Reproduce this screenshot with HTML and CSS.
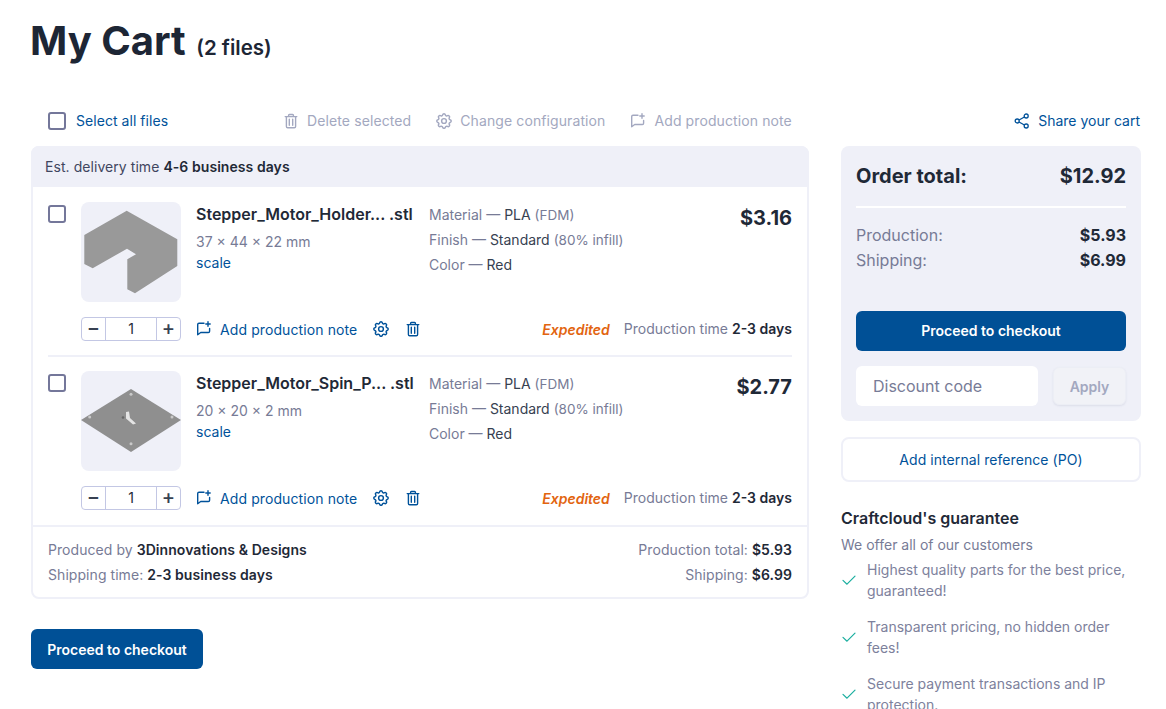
FILE: index.html
```html
<!DOCTYPE html>
<html lang="en">
<head>
<meta charset="utf-8">
<title>My Cart</title>
<link rel="stylesheet" href="styles.css">
</head>
<body>
<svg class="defs" width="0" height="0" aria-hidden="true">
  <symbol id="i-trash" viewBox="0 0 16 16"><path d="M2.200 3.600h11.600M5.600 3.400V2.300c0-.5.3-.8.8-.8h3.200c.5 0 .8.3.8.8v1.100M3.400 3.800v9.600c0 .8.5 1.300 1.300 1.300h6.600c.8 0 1.300-.5 1.300-1.300V3.800M6.300 6.300v5.900M9.700 6.300v5.900" fill="none" stroke="currentColor" stroke-width="1.400" stroke-linecap="round" stroke-linejoin="round"/></symbol>
  <symbol id="i-gear" viewBox="2 2 20 20"><path d="M10.300 4.300c.4-1.800 3-1.800 3.400 0a1.700 1.700 0 0 0 2.600 1.100c1.500-1 3.400.9 2.400 2.400a1.700 1.700 0 0 0 1 2.600c1.800.4 1.800 3 0 3.400a1.700 1.700 0 0 0-1 2.600c1 1.500-.9 3.400-2.400 2.400a1.700 1.700 0 0 0-2.600 1c-.4 1.800-3 1.800-3.400 0a1.700 1.700 0 0 0-2.600-1c-1.500 1-3.400-.9-2.400-2.400a1.700 1.700 0 0 0-1-2.600c-1.800-.4-1.800-3 0-3.400a1.700 1.700 0 0 0 1-2.600c-1-1.500.9-3.400 2.400-2.400a1.700 1.700 0 0 0 2.600-1.100z" fill="none" stroke="currentColor" stroke-width="1.800" stroke-linejoin="round"/><circle cx="12" cy="12" r="3" fill="none" stroke="currentColor" stroke-width="1.800"/></symbol>
  <symbol id="i-note" viewBox="0 0 16 16"><path d="M8 2.200H3c-.8 0-1.300.5-1.300 1.300v10.200l3-2.200h7.600c.8 0 1.300-.5 1.300-1.300V7.400M12 .8v4.400M9.800 3h4.400" fill="none" stroke="currentColor" stroke-width="1.400" stroke-linecap="round" stroke-linejoin="round"/></symbol>
  <symbol id="i-share" viewBox="0 0 16 16"><g fill="none" stroke="currentColor" stroke-width="1.300"><circle cx="3.200" cy="8" r="2"/><circle cx="12.200" cy="3" r="2"/><circle cx="12.200" cy="13" r="2"/><path d="M5 7l5.400-3M5 9l5.400 3"/></g></symbol>
  <symbol id="i-check" viewBox="0 0 14 14"><path d="M1 7.400l4 3.800L13 3.200" fill="none" stroke="currentColor" stroke-width="1.200" stroke-linecap="round" stroke-linejoin="round"/></symbol>
</svg>

<main class="page">
  <h1 class="title">My Cart <small class="title-count">(2 files)</small></h1>

  <div class="toolbar">
    <label class="select-all"><span class="check"></span><span>Select all files</span></label>
    <div class="bulk">
      <span class="bulk-item"><svg class="ic16"><use href="#i-trash"/></svg>Delete selected</span>
      <span class="bulk-item"><svg class="ic16"><use href="#i-gear"/></svg>Change configuration</span>
      <span class="bulk-item"><svg class="ic16"><use href="#i-note"/></svg>Add production note</span>
    </div>
    <span class="share"><svg class="ic16"><use href="#i-share"/></svg>Share your cart</span>
  </div>

  <div class="columns">
    <div class="main-col">
      <section class="cart">
        <div class="cart-head">Est. delivery time <b>4-6 business days</b></div>

        <div class="items">
          <article class="item">
            <div class="item-top">
              <span class="check item-check"></span>
              <div class="thumb">
                <svg width="100" height="100" viewBox="0 0 100 100"><path d="M45.700 8.700 L96.300 37.300 L96.300 64 L54 91.300 L46.300 87.300 L46.300 57.300 L55 52.300 L46 46.700 L11.700 66.300 L3.300 62 L3.300 33 Z" fill="#999"/></svg>
              </div>
              <div class="file">
                <div class="file-name">Stepper_Motor_Holder... .stl</div>
                <div class="file-size">37 × 44 × 22 mm</div>
                <div class="file-scale">scale</div>
              </div>
              <ul class="spec">
                <li>Material — <em>PLA</em> <span>(FDM)</span></li>
                <li>Finish — <em>Standard</em> <span>(80% infill)</span></li>
                <li>Color — <em>Red</em></li>
              </ul>
              <div class="price">$3.16</div>
            </div>
            <div class="item-bottom">
              <div class="stepper"><span class="step">−</span><span class="qty">1</span><span class="step">+</span></div>
              <span class="note"><svg class="ic16"><use href="#i-note"/></svg><span class="note-text">Add production note</span></span>
              <svg class="ic16 act gear"><use href="#i-gear"/></svg>
              <svg class="ic16 act"><use href="#i-trash"/></svg>
              <span class="expedited">Expedited</span>
              <span class="prod-time">Production time <b>2-3 days</b></span>
            </div>
          </article>

          <article class="item">
            <div class="item-top">
              <span class="check item-check"></span>
              <div class="thumb">
                <svg width="100" height="100" viewBox="0 0 100 100"><path d="M50 18 L100 49 L50 81 L0 49 Z" fill="#8f8f8f"/><g fill="#c9c9c9"><circle cx="50" cy="23.300" r="1.500"/><circle cx="8.700" cy="46" r="1.500"/><circle cx="91" cy="46" r="1.500"/><circle cx="50" cy="72.700" r="1.500"/></g><path d="M45 41 L45 47.500 L52 53.500 L55 52.500 L49 47 L48 40.500 Z" fill="#e4e4e4"/><circle cx="42" cy="46.500" r="1.300" fill="#666"/></svg>
              </div>
              <div class="file">
                <div class="file-name">Stepper_Motor_Spin_P... .stl</div>
                <div class="file-size">20 × 20 × 2 mm</div>
                <div class="file-scale">scale</div>
              </div>
              <ul class="spec">
                <li>Material — <em>PLA</em> <span>(FDM)</span></li>
                <li>Finish — <em>Standard</em> <span>(80% infill)</span></li>
                <li>Color — <em>Red</em></li>
              </ul>
              <div class="price">$2.77</div>
            </div>
            <div class="item-bottom">
              <div class="stepper"><span class="step">−</span><span class="qty">1</span><span class="step">+</span></div>
              <span class="note"><svg class="ic16"><use href="#i-note"/></svg><span class="note-text">Add production note</span></span>
              <svg class="ic16 act gear"><use href="#i-gear"/></svg>
              <svg class="ic16 act"><use href="#i-trash"/></svg>
              <span class="expedited">Expedited</span>
              <span class="prod-time">Production time <b>2-3 days</b></span>
            </div>
          </article>
        </div>

        <div class="cart-foot">
          <div>
            <p>Produced by <b>3Dinnovations &amp; Designs</b></p>
            <p>Shipping time: <b>2-3 business days</b></p>
          </div>
          <div class="foot-right">
            <p>Production total: <b>$5.93</b></p>
            <p>Shipping: <b>$6.99</b></p>
          </div>
        </div>
      </section>
      <button class="btn btn-main">Proceed to checkout</button>
    </div>

    <aside class="side">
      <div class="summary">
        <div class="total"><span>Order total:</span><span>$12.92</span></div>
        <div class="line"><span>Production:</span><b>$5.93</b></div>
        <div class="line"><span>Shipping:</span><b>$6.99</b></div>
        <button class="btn btn-full">Proceed to checkout</button>
        <div class="discount">
          <input class="code" type="text" placeholder="Discount code">
          <button class="apply">Apply</button>
        </div>
      </div>
      <button class="po">Add internal reference (PO)</button>
      <h2 class="guarantee">Craftcloud's guarantee</h2>
      <p class="offer">We offer all of our customers</p>
      <ul class="perks">
        <li><svg class="ic-check"><use href="#i-check"/></svg><span>Highest quality parts for the best price, guaranteed!</span></li>
        <li><svg class="ic-check"><use href="#i-check"/></svg><span>Transparent pricing, no hidden order fees!</span></li>
        <li><svg class="ic-check"><use href="#i-check"/></svg><span>Secure payment transactions and IP protection.</span></li>
      </ul>
    </aside>
  </div>
</main>
</body>
</html>
```
FILE: styles.css
```css
* { box-sizing: border-box; }
html, body { height: 709px; overflow: hidden; }
body { margin: 0; background: #fff; color: #1f2937; font-family: Inter, "Liberation Sans", sans-serif; font-size: 14px; line-height: 20px; }
.defs { position: absolute; }
.page { padding: 16px 25px 0 31px; }
.title { margin: 0 0 0 -1px; font-size: 40px; line-height: 50px; font-weight: 700; color: #1d2635; }
.title-count { margin-left: 1px; font-size: 20.500px; font-weight: 600; }
.toolbar { display: flex; align-items: center; height: 24px; margin-top: 36px; padding: 0 1px 0 17px; letter-spacing: .1px; }
.select-all { display: flex; align-items: center; gap: 10px; color: #00529a; letter-spacing: .05px; }
.check { display: block; width: 18px; height: 18px; border: 2px solid #74779a; border-radius: 3px; background: #fff; flex: none; }
.bulk { display: flex; gap: 25px; margin-left: 115px; color: #a3a8c0; }
.bulk-item { display: flex; align-items: center; gap: 8px; }
.ic16 { width: 16px; height: 16px; flex: none; display: block; }
.share { display: flex; align-items: center; gap: 8px; margin-left: auto; color: #00529a; letter-spacing: 0; }
.columns { display: flex; gap: 32px; margin-top: 13px; align-items: flex-start; }
.main-col { width: 778px; flex: none; }
.cart { height: 453px; border: 2px solid #eff0f8; border-radius: 8px; }
.cart-head { height: 41px; margin: -2px -2px 0; padding: 11px 14px 0; background: #eff0f8; border-radius: 8px 8px 0 0; color: #3f4660; letter-spacing: .06px; }
.cart-head b { font-weight: 600; color: #1f2937; }
.items { padding: 15px 15px 0; }
.item + .item { border-top: 2px solid #eff0f8; margin-top: 14px; padding-top: 14px; }
.item-top { display: flex; height: 100px; }
.item-check { margin-top: 3px; }
.thumb { width: 100px; height: 100px; margin-left: 15px; background: #eff0f8; border-radius: 8px; flex: none; overflow: hidden; }
.thumb svg { display: block; }
.file { width: 248px; padding: 2px 0 0 15px; flex: none; }
.file-name { font-size: 16px; line-height: 20px; font-weight: 600; color: #1f2937; white-space: nowrap; }
.file-size { margin-top: 8px; font-size: 14px; line-height: 20px; color: #777b96; }
.file-scale { margin-top: 1px; font-size: 14px; line-height: 20px; color: #00529a; }
.spec { list-style: none; margin: 0; padding: 3px 0 0; flex: 1; color: #777b96; font-size: 14px; }
.spec li { height: 25px; line-height: 20px; white-space: nowrap; }
.spec em { font-style: normal; color: #374151; }
.spec span { font-size: 13.500px; }
.price { font-size: 20px; line-height: 24px; font-weight: 700; color: #1f2937; margin-top: 4px; }
.item-bottom { display: flex; align-items: center; height: 24px; margin-top: 15px; padding-left: 33px; }
.stepper { display: flex; width: 100px; height: 24px; border: 1px solid #c3c7e4; border-radius: 4px; flex: none; }
.step { width: 23px; text-align: center; line-height: 21px; font-size: 20px; font-weight: 500; color: #374151; flex: none; }
.qty { flex: 1; text-align: center; line-height: 22px; border: solid #c3c7e4; border-width: 0 1px; color: #1f2937; }
.note { display: flex; align-items: center; gap: 8px; margin-left: 15px; color: #00529a; letter-spacing: .1px; }
.note-text { padding-top: 2px; }
.act { color: #00529a; }
.gear { margin-left: 16px; margin-right: 16px; }
.expedited { margin-left: auto; padding-top: 2px; font-weight: 600; font-style: italic; color: #e2640f; }
.prod-time { margin-left: 14px; color: #777b96; }
.prod-time b { font-weight: 600; color: #1f2937; }
.cart-foot { display: flex; justify-content: space-between; margin-top: 15px; padding: 13px 15px 0; border-top: 2px solid #eff0f8; color: #777b96; letter-spacing: .06px; }
.cart-foot p { margin: 0 0 5px; line-height: 20px; }
.cart-foot b { font-weight: 600; color: #1f2937; }
.foot-right { text-align: right; }
.btn { display: block; height: 40px; border: 0; border-radius: 6px; background: #005096; color: #fff; font: 600 14px/20px Inter, "Liberation Sans", sans-serif; }
.btn-main { width: 172px; margin-top: 30px; padding-top: 2px; }
.side { width: 300px; flex: none; }
.summary { height: 275px; background: #eff0f8; border-radius: 8px; padding: 15px; }
.total { display: flex; justify-content: space-between; height: 42px; padding-top: 3px; font-size: 20px; line-height: 24px; font-weight: 700; color: #1f2937; border-bottom: 2px solid #fff; box-sizing: content-box; }
.line { display: flex; justify-content: space-between; height: 25px; line-height: 25px; font-size: 16px; color: #777b96; }
.total + .line { margin-top: 15px; }
.line b { font-weight: 700; color: #1f2937; }
.btn-full { width: 100%; margin-top: 38px; }
.discount { display: flex; justify-content: space-between; align-items: center; margin-top: 15px; }
.code { width: 182px; height: 40px; border: 0; border-radius: 6px; padding: 0 17px; background: #fff; font: 400 16px Inter, "Liberation Sans", sans-serif; color: #777b96; }
.code::placeholder { color: #777b96; opacity: 1; }
.apply { width: 73px; height: 38px; border: 1px solid #eceef5; border-radius: 6px; background: #f1f2f7; box-shadow: 0 1px 2px rgba(120, 125, 160, .15); color: #a3a8c0; font: 600 14px Inter, "Liberation Sans", sans-serif; }
.po { display: block; width: 100%; height: 45px; margin-top: 16px; background: #fff; border: 2px solid #eff0f8; border-radius: 8px; color: #00529a; font: 400 14px Inter, "Liberation Sans", sans-serif; letter-spacing: .07px; }
.guarantee { margin: 24px 0 0; font-size: 16px; line-height: 24px; font-weight: 600; color: #1f2937; }
.offer { margin: 5px 0 0; color: #777b96; }
.perks { list-style: none; margin: 4px 0 0; padding: 0; color: #7d819c; }
.perks li { display: flex; align-items: center; margin-bottom: 15px; line-height: 21px; }
.perks span { margin-left: 11px; }
.ic-check { width: 14px; height: 14px; margin-left: 1px; color: #1aae9f; flex: none; }
```
